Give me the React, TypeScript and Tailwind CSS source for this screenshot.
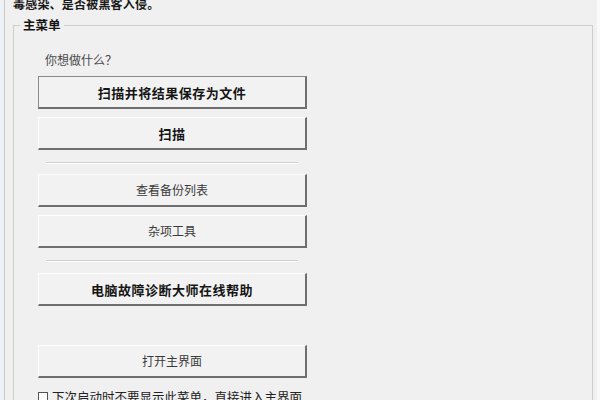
import React from "react";

const FONT = { fontFamily: '"Noto Sans CJK SC", "Noto Sans", sans-serif' };

function Btn({ label, bold, isDefault }: { label: string; bold?: boolean; isDefault?: boolean }) {
  return (
    <div
      className={
        "w-[269px] h-[33px] flex items-center justify-center bg-[#f2f2f2] border-t border-l border-r-2 border-b-2 border-r-[#6f6f6f] border-b-[#6f6f6f] " +
        (isDefault ? "border-t-[#8a8a8a] border-l-[#8a8a8a]" : "border-t-[#fdfdfd] border-l-[#fdfdfd]")
      }
    >
      <span
        className={
          bold
            ? "text-[13px] font-bold text-[#151515] tracking-[0.5px] leading-none"
            : "text-[12px] text-[#3a3a3a] leading-none"
        }
      >
        {label}
      </span>
    </div>
  );
}

function Sep() {
  return <div className="ml-[8px] w-[252px] h-px bg-[#cfcfcf] border-b border-b-white box-content" />;
}

export default function App() {
  return (
    <div className="w-[600px] h-[400px] bg-[#f0f0f0] overflow-hidden flex" style={FONT}>
      <div className="w-[4px] h-full bg-[#eef2f6]" />
      <div className="w-px h-full bg-[#c9c9c9]" />
      <div className="flex-1 flex flex-col">
        <div className="ml-[8px] mt-[-4px] h-[16px] text-[12px] leading-[16px] text-[#1a1a1a] font-bold tracking-[0.2px]">
          毒感染、是否被黑客入侵。
        </div>
        <div className="relative ml-[8px] mt-[13px] w-[580px] h-[400px] border border-[#cdcdcd]">
          <span className="absolute left-[6px] top-[-9px] px-[3px] bg-[#f0f0f0] text-[12.5px] leading-[16px] font-bold text-[#151515]">
            主菜单
          </span>
          <div className="flex flex-col pl-[24px]">
            <div className="mt-[27px] ml-[7px] text-[12px] leading-[14px] text-[#4a4a4a]">你想做什么？</div>
            <div className="mt-[9px] flex flex-col">
              <Btn label="扫描并将结果保存为文件" bold isDefault />
              <div className="h-[8px]" />
              <Btn label="扫描" bold />
              <div className="h-[12px]" />
              <Sep />
              <div className="h-[10px]" />
              <Btn label="查看备份列表" />
              <div className="h-[8px]" />
              <Btn label="杂项工具" />
              <div className="h-[12px]" />
              <Sep />
              <div className="h-[11px]" />
              <Btn label="电脑故障诊断大师在线帮助" bold />
              <div className="h-[39px]" />
              <Btn label="打开主界面" />
            </div>
            <div className="mt-[11px] flex items-center gap-[4px]">
              <div className="w-[10px] h-[10px] border border-[#555] bg-white" />
              <span className="text-[12.5px] leading-[16px] text-[#222]">
                下次启动时不要显示此菜单，直接进入主界面
              </span>
            </div>
          </div>
        </div>
      </div>
      <div className="w-[3px] h-full bg-[#fafafa]" />
    </div>
  );
}
